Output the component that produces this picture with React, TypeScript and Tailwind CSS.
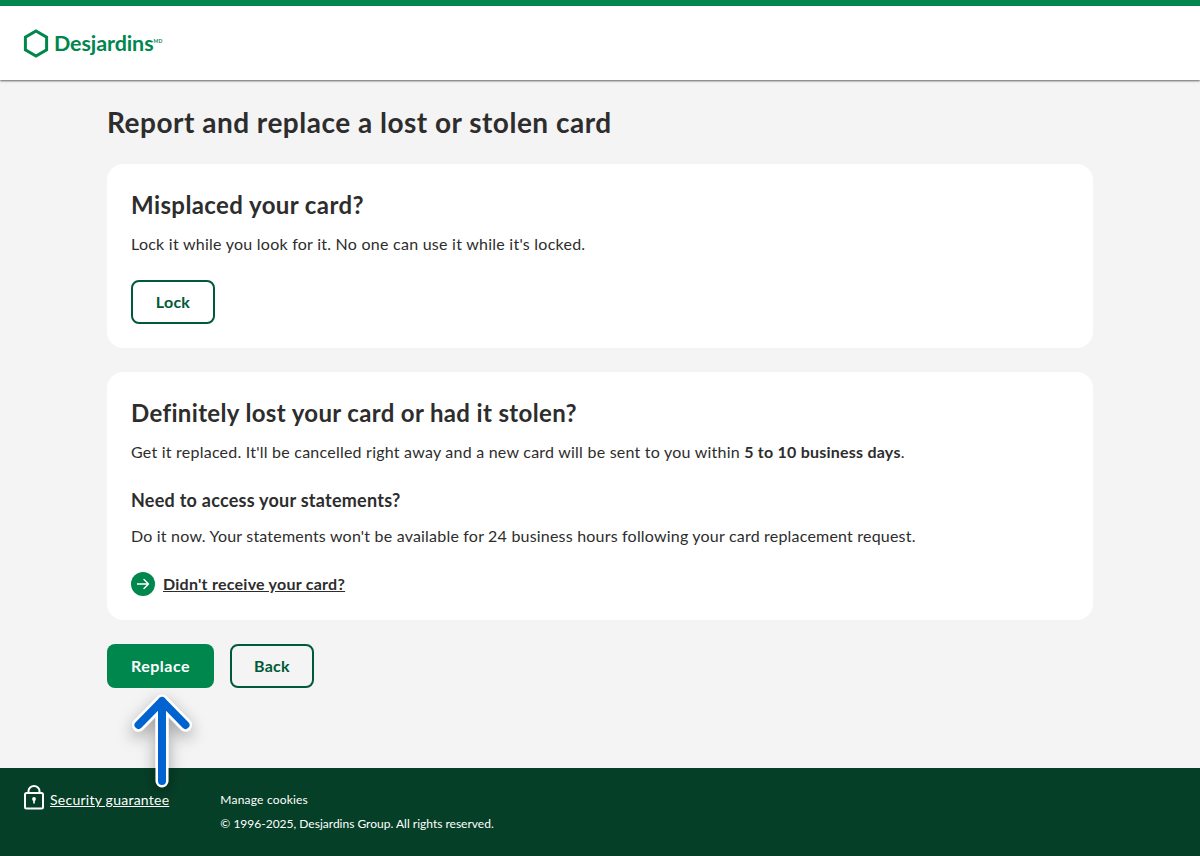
import React from "react";

function Logo() {
  return (
    <div className="flex items-center">
      <svg width="26" height="30" viewBox="0 0 26 30" className="block">
        <path d="M13 2 L23.6 8.2 L23.6 20.8 L13 27 L2.4 20.8 L2.4 8.2 Z" fill="none" stroke="#00874e" strokeWidth="3" strokeLinejoin="miter" />
      </svg>
      <span className="ml-[5px] text-[21.5px] leading-none font-bold tracking-[-0.1px] text-[#00874e]">Desjardins</span>
      <span className="self-start mt-[10px] text-[5px] leading-none font-bold text-[#00874e]">MD</span>
    </div>
  );
}

function LockIcon() {
  return (
    <svg width="22" height="25" viewBox="0 0 22 25" className="block">
      <path d="M5.5 8 V6 a5.5 5 0 0 1 11 0 V8" fill="none" stroke="#fff" strokeWidth="2" />
      <rect x="2" y="8" width="18" height="15.5" rx="1.5" fill="none" stroke="#fff" strokeWidth="2" />
      <circle cx="11" cy="14" r="1.9" fill="#fff" />
      <rect x="10.2" y="14" width="1.6" height="4.5" fill="#fff" />
    </svg>
  );
}

function Arrow() {
  return (
    <svg width="100" height="110" viewBox="0 0 100 110" className="absolute left-[111px] top-[685px] pointer-events-none overflow-visible">
      <defs>
        <filter id="arrow-shadow" x="-50%" y="-50%" width="200%" height="200%">
          <feDropShadow dx="0" dy="6" stdDeviation="8" floodColor="#000" floodOpacity="0.35" />
        </filter>
      </defs>
      <g fill="none" strokeLinecap="round" strokeLinejoin="round">
        <path d="M51 16 V96 M27.5 40 L51 16 L74.5 40" stroke="#fff" strokeWidth="13" filter="url(#arrow-shadow)" />
        <path d="M51 16 V96 M27.5 40 L51 16 L74.5 40" stroke="#0063cf" strokeWidth="8" />
      </g>
    </svg>
  );
}

export default function App() {
  return (
    <div className="relative flex h-[856px] flex-col overflow-hidden bg-[#f4f4f4] font-['Lato',sans-serif] text-[#2d2d2d] tracking-[0.25px]">
      <header className="z-10 h-[80px] border-t-[6px] border-[#00874e] bg-white pl-[23px] pt-[23px] shadow-[0_1px_2px_rgba(0,0,0,0.6)]">
        <Logo />
      </header>

      <main className="flex flex-1 flex-col px-[107px] pt-[22px]">
        <h1 className="text-[28px] leading-[40px] font-bold tracking-[0.5px]">Report and replace a lost or stolen card</h1>

        <section className="mt-[22px] h-[184px] rounded-2xl bg-white px-6 pt-6">
          <h2 className="text-[24px] leading-[34px] font-bold tracking-[0.4px]">Misplaced your card?</h2>
          <p className="mt-[10px] text-[16px] leading-6">Lock it while you look for it. No one can use it while it's locked.</p>
          <button className="mt-6 h-11 w-[84px] rounded-lg border-2 border-[#005a38] text-[16px] font-bold text-[#005a38]">Lock</button>
        </section>

        <section className="mt-6 h-[248px] rounded-2xl bg-white px-6 pt-6">
          <h2 className="text-[24px] leading-[34px] font-bold tracking-[0.35px]">Definitely lost your card or had it stolen?</h2>
          <p className="mt-[10px] text-[16px] leading-6 tracking-[0.23px]">
            Get it replaced. It'll be cancelled right away and a new card will be sent to you within <strong>5 to 10 business days</strong>.
          </p>
          <h3 className="mt-[24px] text-[18px] leading-6 font-bold">Need to access your statements?</h3>
          <p className="mt-[12px] text-[16px] leading-6 tracking-[0.2px]">Do it now. Your statements won't be available for 24 business hours following your card replacement request.</p>
          <div className="mt-6 flex items-center gap-2">
            <span className="flex size-6 items-center justify-center rounded-full bg-[#00874e]">
              <svg width="14" height="14" viewBox="0 0 14 14" fill="none" stroke="#fff" strokeWidth="1.4" strokeLinecap="round" strokeLinejoin="round">
                <path d="M1.5 7 H12.5 M8 2.5 L12.5 7 L8 11.5" />
              </svg>
            </span>
            <a className="text-[16px] leading-6 font-bold underline">Didn't receive your card?</a>
          </div>
        </section>

        <div className="mt-6 flex gap-4">
          <button className="h-11 w-[107px] rounded-lg bg-[#00874e] text-[16px] font-bold text-white tracking-[0.5px]">Replace</button>
          <button className="h-11 w-[84px] rounded-lg border-2 border-[#005a38] text-[16px] font-bold text-[#005a38]">Back</button>
        </div>
      </main>

      <footer className="flex h-[88px] items-start bg-[#063f27] pl-[23px] text-white">
        <div className="mt-[17px] flex items-start">
          <LockIcon />
          <a className="ml-[5px] mt-[5px] text-[14px] leading-5 underline">Security guarantee</a>
        </div>
        <div className="ml-[51px] mt-[22px] text-[12px] leading-5 tracking-normal">
          <p className="tracking-[0.2px]">Manage cookies</p>
          <p className="mt-1">© 1996-2025, Desjardins Group. All rights reserved.</p>
        </div>
      </footer>

      <Arrow />
    </div>
  );
}
